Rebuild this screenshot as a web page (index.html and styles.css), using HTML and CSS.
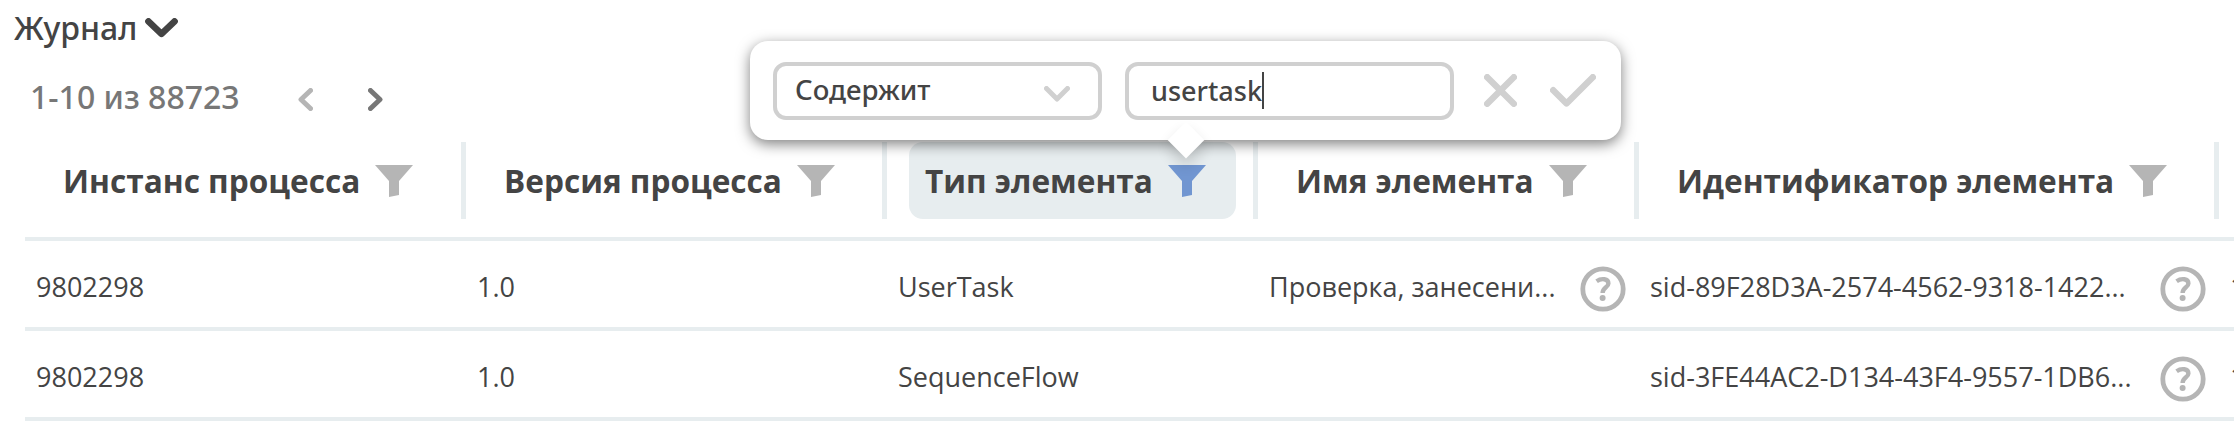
FILE: index.html
```
<!DOCTYPE html>
<html lang="ru">
<head>
<meta charset="utf-8">
<title>Журнал</title>
<link rel="stylesheet" href="styles.css">
</head>
<body>
<svg class="defs" width="0" height="0">
  <symbol id="funnel" viewBox="0 0 38 32"><path fill="currentColor" d="M0 0H38L24 16V30L14 32V16Z"/></symbol>
  <symbol id="help" viewBox="0 0 46 46"><circle cx="23" cy="23" r="20.2" fill="none" stroke="currentColor" stroke-width="4.8"/><path d="M16.6 15.2C21.5 11.8 28.4 12.6 28.4 17.4C28.4 21.4 22.6 21.2 22.6 27" fill="none" stroke="currentColor" stroke-width="4.4"/><circle cx="22.6" cy="32" r="3" fill="currentColor"/></symbol>
</svg>
<main class="journal">
  <h1 class="title">Журнал
    <svg class="title-chevron" viewBox="0 0 33 20"><path d="M3.4 3.4L16.5 15.8L29.6 3.4"/></svg>
  </h1>
  <nav class="pager">
    <span class="range">1-10 из 88723</span>
    <svg class="arrow prev" viewBox="0 0 15 23"><path d="M12.5 2.5L3 11.5L12.5 20.5"/></svg>
    <svg class="arrow next" viewBox="0 0 15 23"><path d="M2.5 2.5L12 11.5L2.5 20.5"/></svg>
  </nav>
  <section class="table">
    <div class="row head">
      <div class="th"><span class="label">Инстанс процесса<svg class="funnel"><use href="#funnel"/></svg></span></div>
      <div class="th"><span class="label">Версия процесса<svg class="funnel"><use href="#funnel"/></svg></span></div>
      <div class="th"><span class="label active">Тип элемента<svg class="funnel"><use href="#funnel"/></svg></span></div>
      <div class="th"><span class="label">Имя элемента<svg class="funnel"><use href="#funnel"/></svg></span></div>
      <div class="th"><span class="label">Идентификатор элемента<svg class="funnel"><use href="#funnel"/></svg></span></div>
      <div></div>
    </div>
    <div class="row">
      <div class="td">9802298</div>
      <div class="td">1.0</div>
      <div class="td">UserTask</div>
      <div class="td">Проверка, занесени...<svg class="help"><use href="#help"/></svg></div>
      <div class="td">sid-89F28D3A-2574-4562-9318-1422...<svg class="help"><use href="#help"/></svg></div>
      <div class="td">1</div>
    </div>
    <div class="row">
      <div class="td">9802298</div>
      <div class="td">1.0</div>
      <div class="td">SequenceFlow</div>
      <div class="td"></div>
      <div class="td">sid-3FE44AC2-D134-43F4-9557-1DB6...<svg class="help"><use href="#help"/></svg></div>
      <div class="td">1</div>
    </div>
  </section>
</main>
<div class="popup">
  <div class="field select"><span>Содержит</span><svg class="select-chevron" viewBox="0 0 26 16"><path d="M2.5 2.5L13 13L23.5 2.5"/></svg></div>
  <div class="field input"><span>usertask</span><i class="caret"></i></div>
  <svg class="cancel" viewBox="0 0 33 33"><path d="M3.2 3.2L29.8 29.8M29.8 3.2L3.2 29.8"/></svg>
  <svg class="apply" viewBox="0 0 46 33"><path d="M3.2 16.2L16.5 29.4L42.8 3.2"/></svg>
</div>
</body>
</html>
```
FILE: styles.css
```
* { box-sizing: border-box; }
body {
  margin: 0;
  width: 2238px;
  height: 425px;
  overflow: hidden;
  position: relative;
  background: #fff;
  color: #444;
  font-family: "Open Sans", "Noto Sans", sans-serif;
}
svg { display: block; flex: none; }
.defs { position: absolute; }
.title, .pager, .field { font-family: "Noto Sans", "Open Sans", sans-serif; }
.title {
  display: flex;
  align-items: center;
  gap: 8px;
  height: 56px;
  margin: 0;
  padding: 0 0 1px 14px;
  font-size: 32px;
  font-weight: 500;
}
.title-chevron { width: 33px; height: 20px; }
.title-chevron path { fill: none; stroke: #444; stroke-width: 6.6; stroke-linecap: round; stroke-linejoin: round; }
.pager {
  display: flex;
  align-items: center;
  height: 86px;
  padding: 0 0 4px 30px;
  color: #777;
  font-size: 32px;
  font-weight: 500;
}
.range { width: 268px; padding-bottom: 1px; }
.arrow { width: 15px; height: 23px; fill: none; stroke-width: 5; stroke-linecap: round; stroke-linejoin: round; margin-top: 4px; }
.arrow path { stroke: currentColor; }
.prev { color: #b5b5b5; margin-right: 55px; }
.next { color: #777; }
.table { width: 2234px; padding-left: 25px; overflow: hidden; }
.row {
  display: grid;
  grid-template-columns: 441px 421px 371px 381px 580px 15px;
  height: 90px;
  border-bottom: 4px solid #e7edef;
}
.head { height: 99px; align-items: start; }
.th {
  display: flex;
  height: 77px;
  padding-left: 22px;
  border-right: 5px solid #e7edef;
}
.label {
  display: flex;
  align-items: center;
  gap: 15px;
  padding: 0 30px 0 16px;
  font-size: 31.6px;
  font-weight: 700;
  white-space: nowrap;
}
.active { background: #e7edef; border-radius: 14px; }
.funnel { width: 38px; height: 32px; color: #b5b5b5; }
.active .funnel { color: #7196d1; }
.td {
  display: flex;
  align-items: center;
  justify-content: space-between;
  padding: 5px 13px 0 11px;
  font-size: 27px;
  white-space: nowrap;
  overflow: hidden;
}
.help { width: 46px; height: 46px; margin-top: 4px; color: #b5b5b5; }
.popup {
  position: absolute;
  left: 750px;
  top: 41px;
  display: flex;
  align-items: center;
  width: 871px;
  height: 99px;
  padding: 0 25px 0 23px;
  border-radius: 18px;
  background: #fff;
  box-shadow: 0 4px 14px rgba(0, 0, 0, .5);
}
.popup::after {
  content: "";
  position: absolute;
  left: 423px;
  top: 86px;
  width: 26px;
  height: 26px;
  background: #fff;
  transform: rotate(45deg);
  box-shadow: 6px 6px 14px rgba(0, 0, 0, .16);
}
.field {
  display: flex;
  align-items: center;
  width: 329px;
  height: 58px;
  border: 4px solid #d0d0d0;
  border-radius: 13px;
  font-size: 27px;
  font-weight: 500;
}
.select { justify-content: space-between; padding: 0 28px 0 18px; margin-right: 23px; font-size: 27.6px; }
.select span { padding-bottom: 4px; }
.input { padding-left: 22px; margin-right: 30px; }
.caret { width: 2px; height: 37px; background: #444; }
.popup path { fill: none; stroke: #d0d0d0; stroke-linecap: round; stroke-linejoin: round; }
.select-chevron { width: 26px; height: 16px; stroke-width: 5; margin-top: 7px; }
.cancel { width: 33px; height: 33px; stroke-width: 6.4; margin-right: 33px; }
.apply { width: 46px; height: 33px; stroke-width: 6.4; }
```
